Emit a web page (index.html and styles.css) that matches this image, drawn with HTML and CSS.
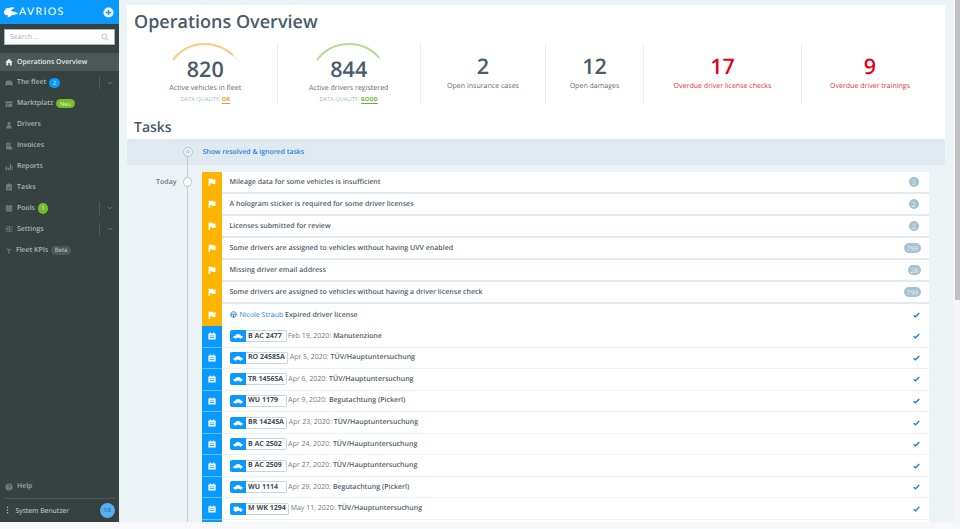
FILE: index.html
```html
<!DOCTYPE html>
<html lang="en">
<head>
<meta charset="utf-8">
<title>Avrios - Operations Overview</title>
<link rel="stylesheet" href="styles.css">
</head>
<body>
<svg class="defs" width="0" height="0" aria-hidden="true">
  <symbol id="flag" viewBox="0 0 10 10"><path d="M.8.8h5l.6 1h3v5.800H5.600l-.6-1H2.600v3.400H.8z"/></symbol>
  <symbol id="cal" viewBox="0 0 10 10"><path fill-rule="evenodd" d="M.5 1.800h1.800V.5h1.200v1.300h3V.5h1.200v1.300h1.800v7.700H.5zM2 4.400v.9h6v-.9zm0 2v.9h6v-.9z"/></symbol>
  <symbol id="car" viewBox="0 0 14 8"><path d="M.5 4.400 3 3.800 4.800 1.400h4.600L11.500 3.800l2 .6v2H11.800a1.300 1.300 0 0 1-2.600 0H4.800a1.300 1.300 0 0 1-2.600 0H.5z"/></symbol>
  <symbol id="truck" viewBox="0 0 14 9"><path d="M.5 1h8v2h2.600l2.400 2.400v2h-1.400a1.300 1.300 0 0 1-2.600 0H5a1.300 1.300 0 0 1-2.600 0H.5z"/></symbol>
  <symbol id="chev" viewBox="0 0 8 5"><path d="M1 1l3 2.600L7 1" fill="none" stroke="currentColor" stroke-width="1"/></symbol>
  <symbol id="check" viewBox="0 0 10 8"><path d="M1 4.200 3.600 6.600 9 1" fill="none" stroke="currentColor" stroke-width="2"/></symbol>
</svg>

<div class="app">
  <div class="shell">
    <aside class="sidebar">
      <header class="brand">
        <svg class="whale" viewBox="0 0 14 11"><path d="M0 6C0 3 2 1 5 1 7 0 9 0 11 1 9 1.500 7.500 2.500 7 4 9 4.500 12 5 14 6.500 12 8 10 8 8 8 7 9.500 5 10.500 3.500 10.500 4 9.500 4 8.500 3.500 8 1.500 8.500 0 7.500 0 6z"/></svg>
        <span class="brand-name">AVRIOS</span>
        <svg class="add" viewBox="0 0 12 12"><circle cx="6" cy="6" r="5.500" fill="#fff"/><path d="M6 3v6M3 6h6" stroke="#0a9aff" stroke-width="1.500"/></svg>
      </header>
      <div class="search">
        <span>Search...</span>
        <svg class="search-icon" viewBox="0 0 10 10"><circle cx="4.300" cy="4.300" r="3.200" fill="none" stroke="#a9b2b6" stroke-width="1"/><path d="M6.800 6.800 9 9" stroke="#a9b2b6" stroke-width="1"/></svg>
      </div>
      <nav class="nav">
        <a class="item active">
          <svg class="ico" viewBox="0 0 10 10"><path fill="#e8ecec" d="M5 .8 9.800 5.200H8.400V9.400H6V6.400H4V9.400H1.600V5.200H.2z"/></svg>
          <span>Operations Overview</span>
        </a>
        <a class="item">
          <svg class="ico" viewBox="0 0 10 10"><path d="M.6 5 2 2h6l1.400 3v3.500H8V7.600H2v.9H.6z"/></svg>
          <span>The fleet</span><b class="count blue">2</b><i class="split"><svg class="chev"><use href="#chev"/></svg></i>
        </a>
        <a class="item">
          <svg class="ico" viewBox="0 0 10 10"><path d="M1 1.500h8L9.600 4H.4zM1 4.800h8v4H1zm1.500 1V7.500h2V5.800z"/></svg>
          <span>Marktplatz</span><b class="pill green">Neu</b>
        </a>
        <a class="item">
          <svg class="ico" viewBox="0 0 10 10"><circle cx="5" cy="2.700" r="1.900"/><path d="M1.500 9.300c0-3 1.500-4.300 3.500-4.300s3.500 1.300 3.500 4.300z"/></svg>
          <span>Drivers</span>
        </a>
        <a class="item">
          <svg class="ico" viewBox="0 0 10 10"><path d="M1.500.8H7v5.400h2V9.300H1.500zm1.200 1.500v.9h3v-.9zm0 2v.9h3v-.9z"/></svg>
          <span>Invoices</span>
        </a>
        <a class="item">
          <svg class="ico" viewBox="0 0 10 10"><path d="M.8 4.500h1.800v4.700H.8zM3.400 6h1.800v3.200H3.400zM6 .8h1.500v8.400H6zM8.200 3.500h1.200v5.700H8.200z"/></svg>
          <span>Reports</span>
        </a>
        <a class="item">
          <svg class="ico" viewBox="0 0 10 10"><path d="M1.300 1.500h2.200L4 .6h2l.5.900h2.200v8H1.300zm2 4.300-.6.600 1.600 1.500 3-3-.6-.6-2.400 2.400z"/></svg>
          <span>Tasks</span>
        </a>
        <a class="item">
          <svg class="ico" viewBox="0 0 10 10"><path d="M1 2h1.500V.8h1V2h3V.8h1V2H9v7.300H1zm1 2.500v.9h1v-.9zm2.500 0v.9h1v-.9zm2.500 0v.9h1v-.9zM2 6.500v.9h1v-.9zm2.500 0v.9h1v-.9zm2.500 0v.9h1v-.9z"/></svg>
          <span>Pools</span><b class="count green">1</b><i class="split"><svg class="chev"><use href="#chev"/></svg></i>
        </a>
        <a class="item">
          <svg class="ico" viewBox="0 0 10 10"><path d="M.5 1.800h4.500V1h1.200v.8h3.300v1H6.200v.8H5v-.8H.5zm0 2.700h1.800v-.8h1.200v.8h6v1h-6v.8H2.300v-.8H.5zm0 2.700H5v-.8h1.200v.8h3.300v1H6.200V9H5v-.8H.5z"/></svg>
          <span>Settings</span><i class="split"><svg class="chev"><use href="#chev"/></svg></i>
        </a>
        <a class="item kpi">
          <svg class="ico" viewBox="0 0 10 10"><path d="M4.600 4.200C3.500 2.800 2.200 2.800 1 3.600c1-.2 2 .1 2.700.9C2.500 4.500 1.600 5.200 1.300 6.400c.8-1 1.900-1.400 3-1.200L3.800 9.500h2.200l-.8-4.300c1 0 2.100.4 3 1.200-.3-1.200-1.300-1.900-2.500-1.900.7-.8 1.700-1.100 2.700-.9C7.200 2.800 5.800 2.800 4.600 4.200z"/></svg>
          <span>Fleet KPIs</span><b class="pill grey">Beta</b>
        </a>
      </nav>
      <div class="side-foot">
        <a class="item help">
          <svg class="ico" viewBox="0 0 10 10"><circle cx="5" cy="5" r="4.500"/><path d="M3.500 3.900C3.600 2.900 4.200 2.500 5 2.500c.9 0 1.600.5 1.600 1.300 0 1.200-1.300 1.100-1.300 2.200" fill="none" stroke="#364242" stroke-width=".9"/><circle cx="5.200" cy="7.400" r=".6" fill="#364242"/></svg>
          <span>Help</span>
        </a>
        <div class="user">
          <svg class="kebab" viewBox="0 0 3 10"><circle cx="1.500" cy="1.500" r=".9"/><circle cx="1.500" cy="5" r=".9"/><circle cx="1.500" cy="8.500" r=".9"/></svg>
          <span class="user-name">System Benutzer</span>
          <span class="avatar">SB</span>
        </div>
      </div>
    </aside>

    <main class="main">
      <section class="card">
        <h1>Operations Overview</h1>
        <div class="stats">
          <div class="stat gauge">
            <svg class="arc" viewBox="0 0 66 18"><path d="M1 17A40 40 0 0 1 65 17" fill="none" stroke="#eef3f6" stroke-width="2"/><path d="M1 17A40 40 0 0 1 61 12.400" fill="none" stroke="#fdcb7e" stroke-width="2"/></svg>
            <strong>820</strong>
            <p>Active vehicles in fleet</p>
            <small>DATA QUALITY: <em class="ok">OK</em></small>
          </div>
          <div class="stat gauge">
            <svg class="arc" viewBox="0 0 66 18"><path d="M1 17A40 40 0 0 1 65 17" fill="none" stroke="#eef3f6" stroke-width="2"/><path d="M1 17A40 40 0 0 1 63 14.500" fill="none" stroke="#b6dc96" stroke-width="2"/></svg>
            <strong>844</strong>
            <p>Active drivers registered</p>
            <small>DATA QUALITY: <em class="good">GOOD</em></small>
          </div>
          <div class="stat"><strong>2</strong><p>Open insurance cases</p></div>
          <div class="stat"><strong>12</strong><p>Open damages</p></div>
          <div class="stat alert"><strong>17</strong><p>Overdue driver license checks</p></div>
          <div class="stat alert"><strong>9</strong><p>Overdue driver trainings</p></div>
        </div>
        <h2>Tasks</h2>
      </section>

      <section class="tasks">
        <div class="line"></div>
        <div class="banner">
          <span class="dot up"><svg viewBox="0 0 8 8"><path d="M2 4 4 2.200 6 4M2 6 4 4.200 6 6" fill="none" stroke="#9fb4c2" stroke-width=".9"/></svg></span>
          <a class="link">Show resolved &amp; ignored tasks</a>
        </div>
        <div class="day">
          <div class="day-label"><span>Today</span><span class="dot"></span></div>
          <div class="rows">
            <div class="row warn"><span class="tag"><svg><use href="#flag"/></svg></span><span class="txt">Mileage data for some vehicles is insufficient</span><span class="badge one">3</span></div>
            <div class="row warn"><span class="tag"><svg><use href="#flag"/></svg></span><span class="txt">A hologram sticker is required for some driver licenses</span><span class="badge one">2</span></div>
            <div class="row warn"><span class="tag"><svg><use href="#flag"/></svg></span><span class="txt">Licenses submitted for review</span><span class="badge one">2</span></div>
            <div class="row warn"><span class="tag"><svg><use href="#flag"/></svg></span><span class="txt">Some drivers are assigned to vehicles without having UVV enabled</span><span class="badge">799</span></div>
            <div class="row warn"><span class="tag"><svg><use href="#flag"/></svg></span><span class="txt">Missing driver email address</span><span class="badge">28</span></div>
            <div class="row warn"><span class="tag"><svg><use href="#flag"/></svg></span><span class="txt">Some drivers are assigned to vehicles without having a driver license check</span><span class="badge">799</span></div>
            <div class="row warn thin"><span class="tag"><svg><use href="#flag"/></svg></span><span class="txt"><svg class="wheel" viewBox="0 0 10 10"><circle cx="5" cy="5" r="4" fill="none" stroke="#1a86dc" stroke-width="1.300"/><path d="M1 5.500 4 4.500h2l3 1M5 5v4" stroke="#1a86dc" stroke-width="1.300" fill="none"/></svg><a class="link">Nicole Straub</a> Expired driver license</span><svg class="tick"><use href="#check"/></svg></div>

            <div class="row due"><span class="tag"><svg><use href="#cal"/></svg></span><span class="plate"><i><svg class="veh"><use href="#car"/></svg></i><b>B AC 2477</b></span><span class="date">Feb 19, 2020:</span><span class="txt">Manutenzione</span><svg class="tick"><use href="#check"/></svg></div>
            <div class="row due"><span class="tag"><svg><use href="#cal"/></svg></span><span class="plate"><i><svg class="veh"><use href="#car"/></svg></i><b>RO 2458SA</b></span><span class="date">Apr 5, 2020:</span><span class="txt">TÜV/Hauptuntersuchung</span><svg class="tick"><use href="#check"/></svg></div>
            <div class="row due"><span class="tag"><svg><use href="#cal"/></svg></span><span class="plate"><i><svg class="veh"><use href="#car"/></svg></i><b>TR 1456SA</b></span><span class="date">Apr 6, 2020:</span><span class="txt">TÜV/Hauptuntersuchung</span><svg class="tick"><use href="#check"/></svg></div>
            <div class="row due"><span class="tag"><svg><use href="#cal"/></svg></span><span class="plate"><i><svg class="veh"><use href="#car"/></svg></i><b>WU 1179</b></span><span class="date">Apr 9, 2020:</span><span class="txt">Begutachtung (Pickerl)</span><svg class="tick"><use href="#check"/></svg></div>
            <div class="row due"><span class="tag"><svg><use href="#cal"/></svg></span><span class="plate"><i><svg class="veh"><use href="#car"/></svg></i><b>BR 1424SA</b></span><span class="date">Apr 23, 2020:</span><span class="txt">TÜV/Hauptuntersuchung</span><svg class="tick"><use href="#check"/></svg></div>
            <div class="row due"><span class="tag"><svg><use href="#cal"/></svg></span><span class="plate"><i><svg class="veh"><use href="#car"/></svg></i><b>B AC 2502</b></span><span class="date">Apr 24, 2020:</span><span class="txt">TÜV/Hauptuntersuchung</span><svg class="tick"><use href="#check"/></svg></div>
            <div class="row due"><span class="tag"><svg><use href="#cal"/></svg></span><span class="plate"><i><svg class="veh"><use href="#car"/></svg></i><b>B AC 2509</b></span><span class="date">Apr 27, 2020:</span><span class="txt">TÜV/Hauptuntersuchung</span><svg class="tick"><use href="#check"/></svg></div>
            <div class="row due"><span class="tag"><svg><use href="#cal"/></svg></span><span class="plate"><i><svg class="veh"><use href="#car"/></svg></i><b>WU 1114</b></span><span class="date">Apr 29, 2020:</span><span class="txt">Begutachtung (Pickerl)</span><svg class="tick"><use href="#check"/></svg></div>
            <div class="row due"><span class="tag"><svg><use href="#cal"/></svg></span><span class="plate"><i><svg class="veh"><use href="#truck"/></svg></i><b>M WK 1294</b></span><span class="date">May 11, 2020:</span><span class="txt">TÜV/Hauptuntersuchung</span><svg class="tick"><use href="#check"/></svg></div>
            <div class="row due"><span class="tag"></span></div>
          </div>
        </div>
      </section>
    </main>

    <div class="scrollbar"><div class="thumb"></div></div>
  </div>
  <div class="strip"></div>
</div>
</body>
</html>
```

FILE: styles.css
```css
* { box-sizing: border-box; }
html, body { margin: 0; height: 100%; overflow: hidden; }
body { font-family: "Open Sans", "Liberation Sans", sans-serif; color: #4a5b69; background: #f7f8f9; text-rendering: geometricPrecision; }
.defs { display: block; height: 0; }
.app { width: 960px; height: 529px; display: flex; flex-direction: column; overflow: hidden; }
.shell { height: 522px; display: flex; overflow: hidden; }
.strip { height: 7px; background: #f7f8f9; }

/* Sidebar */
.sidebar { width: 119px; flex: none; background: #364242; display: flex; flex-direction: column; }
.brand { height: 24px; background: #0a9aff; display: flex; align-items: center; padding: 0 4px; color: #fff; }
.whale { width: 14px; height: 11px; fill: #fff; margin-right: 1px; }
.brand-name { font-family: "Lato", sans-serif; font-size: 10.500px; letter-spacing: 1.400px; font-weight: 400; }
.add { width: 11px; height: 11px; margin-left: auto; margin-right: 1px; }
.search { margin: 5px 4px 0; height: 16px; background: #fff; border: 1px solid #aab3b6; display: flex; align-items: center; justify-content: space-between; padding: 0 5px; font-size: 7px; color: #a8b1b6; }
.search-icon { width: 8px; height: 8px; }
.nav { margin-top: 8px; display: flex; flex-direction: column; }
.item { height: 20.900px; display: flex; align-items: center; padding-left: 5px; font-size: 6.900px; font-weight: 600; color: #a9b3b3; }
.item.active { background: #4c5857; color: #e3e8e8; height: 18px; margin-bottom: 1.500px; }
.ico { width: 8px; height: 8px; fill: #6f7c7c; margin-right: 4px; flex: none; }
.count { width: 10.500px; height: 10.500px; border-radius: 50%; margin-left: 3px; color: #dff1ff; font-size: 6px; font-weight: 400; display: flex; align-items: center; justify-content: center; }
.count.blue { background: #0a9aff; }
.count.green { background: #74bb27; }
.pill { height: 9px; margin-left: 3px; padding: 0 3.500px; border-radius: 5px; font-size: 6px; font-weight: 400; display: flex; align-items: center; }
.pill.green { background: #74bb27; color: #e7f4d8; }
.pill.grey { background: #4c5857; color: #c3cbcb; }
.split { margin-left: auto; width: 20px; height: 13px; border-left: 1px solid #4f5b5b; display: flex; align-items: center; justify-content: center; }
.chev { width: 6px; height: 4px; color: #778484; }
.kpi .ico { margin-right: 3px; }
.side-foot { margin-top: auto; }
.help { color: #9aa5a5; height: 21px; margin-bottom: 1px; }
.user { margin: 0 4px; height: 24px; border-top: 1px solid #4c5857; padding-bottom: 1px; display: flex; align-items: center; }
.kebab { width: 3px; height: 8px; fill: #b7c0c0; margin-left: 1.500px; margin-right: 7px; }
.user-name { font-size: 6.800px; font-weight: 400; color: #d2d8d8; }
.avatar { width: 15px; height: 15px; border-radius: 50%; background: #59aef3; color: #3f86c2; font-size: 6px; font-weight: 700; margin-left: auto; display: flex; align-items: center; justify-content: center; }

/* Main */
.main { width: 834px; flex: none; background: #ecf3f7; padding: 5px 8px 0; overflow: hidden; display: flex; flex-direction: column; }
.card { background: #fff; height: 134px; padding: 0 7px; flex: none; }
h1 { margin: 0; padding-top: 4px; font-size: 18px; line-height: 26px; font-weight: 600; color: #4a5b69; }
.stats { margin-top: 8px; height: 60px; width: 804px; display: grid; grid-template-columns: 142.500px 143.500px 125px 98px 158px 137px; }
.stat { border-left: 1px solid #e9eff3; display: flex; flex-direction: column; align-items: center; padding-top: 11px; }
.stat:first-child { border-left: 0; }
.stat.gauge { padding-top: 0; }
.arc { width: 66px; height: 18px; margin-bottom: -5px; display: block; }
.stat strong { font-size: 21.500px; line-height: 25px; font-weight: 600; color: #4a5b69; }
.gauge strong { line-height: 27px; }
.stat p { margin: 1.500px 0 0; font-size: 7.050px; line-height: 11px; color: #5e6c78; }
.gauge p { margin: 0; }
.stat small { font-size: 5.600px; line-height: 9px; margin-top: .5px; color: #9db8c8; }
.stat em { font-style: normal; font-weight: 700; border-bottom: 1px solid; }
.ok { color: #f59a3c; }
.good { color: #6fb03a; }
.alert strong { color: #e5001c; }
.alert p { color: #ea2a3c; }
h2 { margin: 16px 0 0; font-size: 14px; line-height: 18px; font-weight: 600; color: #4a5b69; }

.tasks { position: relative; flex: 1; }
.line { position: absolute; left: 60px; top: 17px; bottom: 0; width: 1px; background: #c3ccd1; }
.banner { height: 26px; background: #e2eaf1; display: flex; align-items: center; padding-left: 56px; gap: 10px; margin-bottom: 7px; }
.dot { position: relative; width: 9.500px; height: 9.500px; border-radius: 50%; background: #fff; border: 1px solid #b9c4ca; flex: none; display: block; }
.dot.up { background: #eef3f7; }
.dot svg { display: block; width: 7.500px; height: 7.500px; }
.link { color: #1a86dc; font-size: 6.900px; font-weight: 600; }

.day { display: flex; }
.day-label { width: 75px; flex: none; display: flex; justify-content: flex-end; align-items: center; height: 20px; padding-right: 10px; gap: 6px; font-size: 7px; font-weight: 600; color: #6a7784; }
.rows { width: 727px; flex: none; display: flex; flex-direction: column; }
.row { display: flex; align-items: center; background: #fff; font-size: 7px; }
.row.warn { height: 22.050px; border-bottom: 2px solid #e3e9ee; }
.row.warn.thin { height: 21.800px; border-bottom: 0; }
.row.due { height: 21.560px; border-bottom: 1px solid #edf1f4; }
.tag { width: 20px; align-self: stretch; flex: none; display: flex; align-items: center; justify-content: center; margin-right: 7.500px; }
.warn .tag { background: #ffb400; margin-bottom: -2px; border-bottom: 2px solid #fff0; }
.warn.thin .tag { margin-bottom: 0; border-bottom: 0; }
.due .tag { background: #0a9aff; margin-bottom: -1px; border-bottom: 1px solid #66bdfb; }
.tag svg { width: 8px; height: 8px; fill: #fff; }
.txt { font-weight: 600; color: #4d5c69; white-space: pre; }
.txt .link { font-weight: 400; font-size: 7px; }
.wheel { width: 7px; height: 7px; margin-right: 3px; vertical-align: -1px; }
.badge { margin-left: auto; margin-right: 8px; min-width: 10px; height: 10px; padding: 0 3px; border-radius: 5px; background: #a6c1d0; color: #eef4f7; font-size: 6.500px; display: flex; align-items: center; justify-content: center; }
.badge.one { margin-right: 10.500px; }
.tick { margin-left: auto; margin-right: 9px; width: 7px; height: 6px; color: #1a80e0; flex: none; }
.plate { display: flex; height: 12px; margin-right: 1.500px; flex: none; }
.plate i { width: 16px; background: #0a9aff; border-radius: 2px 0 0 2px; display: flex; align-items: center; justify-content: center; }
.veh { width: 10px; height: 6px; fill: #fff; }
.plate b { min-width: 41px; padding: 0 2.500px; border: 1px solid #c4d6e2; border-left: 0; border-radius: 0 2px 2px 0; font-size: 7px; font-weight: 700; color: #3f4c57; white-space: nowrap; display: flex; align-items: center; }
.date { color: #6d7985; margin-right: 2px; }

/* Scrollbar */
.scrollbar { width: 7px; flex: none; background: #f5f6f7; padding-left: 2px; }
.thumb { width: 5px; height: 300px; background: #bfc1c2; }
```
